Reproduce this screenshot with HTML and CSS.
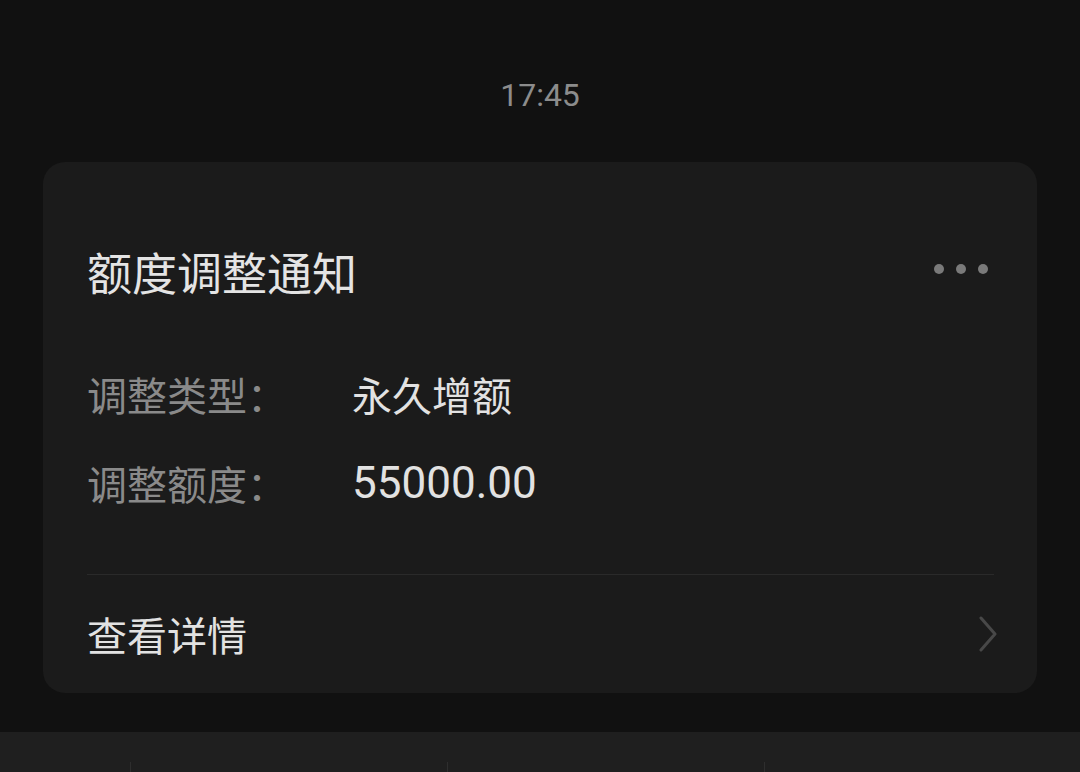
FILE: index.html
```html
<!DOCTYPE html>
<html lang="zh-CN">
<head>
	<meta charset="UTF-8" />
	<title>额度调整通知</title>
	<link rel="stylesheet" href="styles.css">
</head>
<body>
	<div class="chat">
		<div class="time">17:45</div>

		<div class="card">
			<div class="card-head">
				<h2>额度调整通知</h2>
				<div class="more"><span></span><span></span><span></span></div>
			</div>

			<div class="rows">
				<div class="row">
					<span class="label">调整类型：</span>
					<span class="value">永久增额</span>
				</div>
				<div class="row">
					<span class="label">调整额度：</span>
					<span class="value num">55000.00</span>
				</div>
			</div>

			<div class="card-foot">
				<span>查看详情</span>
				<svg class="arrow" width="20" height="36" viewBox="0 0 20 36">
					<path d="M3 2 L17 18 L3 34" fill="none" stroke="#484848" stroke-width="3" stroke-linecap="round" stroke-linejoin="round" />
				</svg>
			</div>
		</div>
	</div>

	<div class="tabbar">
		<div></div>
		<div></div>
		<div></div>
	</div>
</body>
</html>
```

FILE: styles.css
```css
* {
	box-sizing: border-box;
	margin: 0;
	padding: 0;
}

body {
	font-family: "Noto Sans CJK SC", "Noto Sans", sans-serif;
	background: #111111;
	width: 1080px;
	height: 772px;
	overflow: hidden;
	display: flex;
	flex-direction: column;
}

.chat {
	flex: 1;
	padding: 0 43px;
}

.time {
	text-align: center;
	font-family: "Roboto", "Noto Sans", sans-serif;
	font-size: 32px;
	color: #8c8c8c;
	padding-top: 76px;
	height: 162px;
}

.card {
	background: #1b1b1b;
	border-radius: 22px;
	padding: 0 43px 0 44px;
	height: 531px;
}

.card-head {
	display: flex;
	justify-content: space-between;
	align-items: center;
	padding-top: 82px;
}

.card-head h2 {
	font-size: 45px;
	font-weight: normal;
	color: #e4e4e4;
	line-height: 56px;
}

.more {
	display: flex;
	gap: 12px;
	margin-right: 6px;
	margin-top: -6px;
}

.more span {
	width: 10px;
	height: 10px;
	border-radius: 50%;
	background: #7a7a7a;
}

.rows {
	padding-top: 65px;
	display: flex;
	flex-direction: column;
	gap: 31px;
	padding-bottom: 62px;
	border-bottom: 1px solid #2a2a2a;
}

.row {
	display: flex;
	align-items: center;
	height: 58px;
}

.label {
	width: 265px;
	font-size: 40px;
	color: #8a8a8a;
}

.value {
	font-size: 40px;
	color: #e2e2e2;
}

.value.num {
	font-family: "Roboto", "Noto Sans", sans-serif;
	font-size: 44px;
}

.card-foot {
	display: flex;
	justify-content: space-between;
	align-items: center;
	height: 118px;
	font-size: 40px;
	color: #e2e2e2;
}

.arrow {
	margin-right: -4px;
}

.tabbar {
	height: 40px;
	background: #1f1f1f;
	display: flex;
	padding-left: 130px;
	align-items: flex-end;
}

.tabbar div {
	flex-shrink: 0;
	width: 317px;
	height: 10px;
	border-left: 1px solid #2e2e2e;
}
```
